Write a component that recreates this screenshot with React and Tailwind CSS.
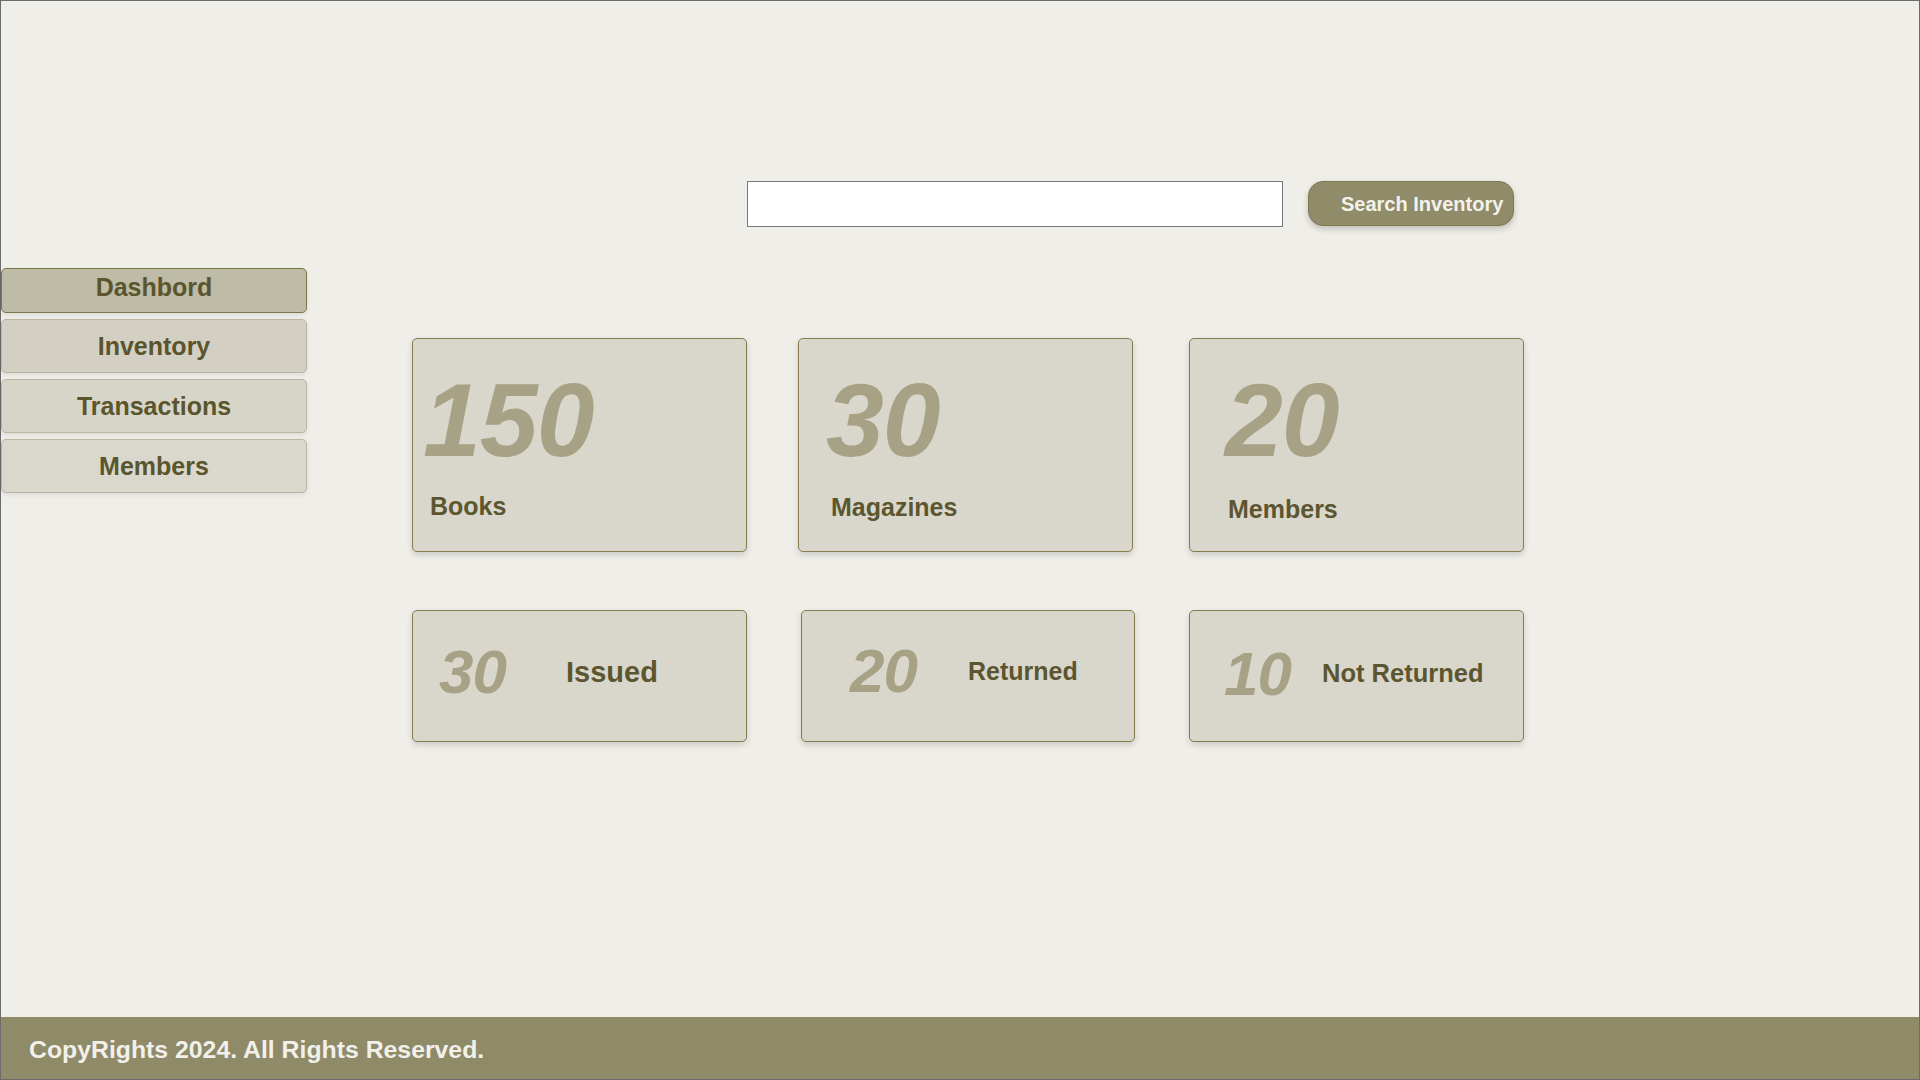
import React from 'react';

const navItems = [
    { label: 'Dashbord', active: true, bg: 'bg-[#bebba7]' },
    { label: 'Inventory', bg: 'bg-[#d3d0c3]' },
    { label: 'Transactions', bg: 'bg-[#d7d5c8]' },
    { label: 'Members', bg: 'bg-[#dad8cd]' },
];

const App = () => {
    return (
        <div className="h-[1080px] w-full border border-[#6b6b6b] bg-[#efeee9] flex flex-col font-['Liberation_Sans',Arial,sans-serif]">
            <main className="flex-1 pt-[180px]">
                {/* Search */}
                <div className="flex items-start">
                    <input
                        type="text"
                        className="ml-[746px] w-[536px] h-[46px] border border-[#777] bg-white outline-none"
                    />
                    <button className="ml-[25px] w-[206px] h-[45px] rounded-[15px] border border-[#7f7750] bg-[#908b69] pl-[32px] pt-[1px] text-left text-[20px] font-bold text-[#f3f2ec] shadow-[0_3px_6px_rgba(0,0,0,0.2)]">
                        Search Inventory
                    </button>
                </div>

                <div className="mt-[41px] flex items-start">
                    {/* Sidebar */}
                    <nav className="w-[306px] flex flex-col gap-[6px]">
                        {navItems.map(item => (
                            <button
                                key={item.label}
                                className={`${item.bg} ${item.active ? 'h-[45px] border-[#7d7448] pb-[6px]' : 'h-[54px] border-[#bab6a3] pt-[1px]'} w-full rounded-[5px] border text-[25px] font-bold text-[#5a552d] shadow-[0_2px_4px_rgba(0,0,0,0.08)]`}
                            >
                                {item.label}
                            </button>
                        ))}
                    </nav>

                    {/* Stats */}
                    <div className="ml-[105px] mt-[70px]">
                        <div className="flex">
                            <div className="w-[335px] h-[214px] rounded-[5px] border border-[#857b4d] bg-[#d9d7cc] shadow-[0_3px_6px_rgba(0,0,0,0.15)] pt-[29px] pl-[10px]">
                                <div className="text-[104px] leading-none font-bold italic tracking-[-1px] text-[#a7a285]">150</div>
                                <div className="mt-[22px] pl-[7px] text-[25px] leading-none font-bold text-[#5c5630]">Books</div>
                            </div>
                            <div className="ml-[51px] w-[335px] h-[214px] rounded-[5px] border border-[#857b4d] bg-[#d9d7cc] shadow-[0_3px_6px_rgba(0,0,0,0.15)] pt-[29px] pl-[23px]">
                                <div className="pl-[4px] text-[104px] leading-none font-bold italic tracking-[-1px] text-[#a7a285]">30</div>
                                <div className="mt-[23px] pl-[9px] text-[25px] leading-none font-bold text-[#5c5630]">Magazines</div>
                            </div>
                            <div className="ml-[56px] w-[335px] h-[214px] rounded-[5px] border border-[#857b4d] bg-[#d9d7cc] shadow-[0_3px_6px_rgba(0,0,0,0.15)] pt-[29px] pl-[29px]">
                                <div className="pl-[6px] text-[104px] leading-none font-bold italic tracking-[-1px] text-[#a7a285]">20</div>
                                <div className="mt-[25px] pl-[9px] text-[25px] leading-none font-bold text-[#5c5630]">Members</div>
                            </div>
                        </div>

                        <div className="mt-[58px] flex">
                            <div className="w-[335px] h-[132px] rounded-[5px] border border-[#857b4d] bg-[#d9d7cc] shadow-[0_3px_6px_rgba(0,0,0,0.15)] flex items-center pb-[8px] pl-[26px]">
                                <span className="text-[62px] leading-none font-bold italic tracking-[-1px] text-[#a7a285]">30</span>
                                <span className="ml-[60px] text-[29px] leading-none font-bold text-[#5c5630]">Issued</span>
                            </div>
                            <div className="ml-[54px] w-[334px] h-[132px] rounded-[5px] border border-[#857b4d] bg-[#d9d7cc] shadow-[0_3px_6px_rgba(0,0,0,0.15)] flex items-center pb-[10px] pl-[48px]">
                                <span className="text-[62px] leading-none font-bold italic tracking-[-1px] text-[#a7a285]">20</span>
                                <span className="ml-[51px] text-[25px] leading-none font-bold text-[#5c5630]">Returned</span>
                            </div>
                            <div className="ml-[54px] w-[335px] h-[132px] rounded-[5px] border border-[#857b4d] bg-[#d9d7cc] shadow-[0_3px_6px_rgba(0,0,0,0.15)] flex items-center pb-[4px] pl-[34px]">
                                <span className="text-[62px] leading-none font-bold italic tracking-[-1px] text-[#a7a285]">10</span>
                                <span className="ml-[31px] text-[25.5px] leading-none font-bold text-[#5c5630]">Not Returned</span>
                            </div>
                        </div>
                    </div>
                </div>
            </main>

            <footer className="h-[62px] bg-[#8f8a68] flex items-center pl-[28px] pt-[4px]">
                <p className="text-[24.8px] font-bold text-[#f1f0ea]">CopyRights 2024. All Rights Reserved.</p>
            </footer>
        </div>
    );
};

export default App;
